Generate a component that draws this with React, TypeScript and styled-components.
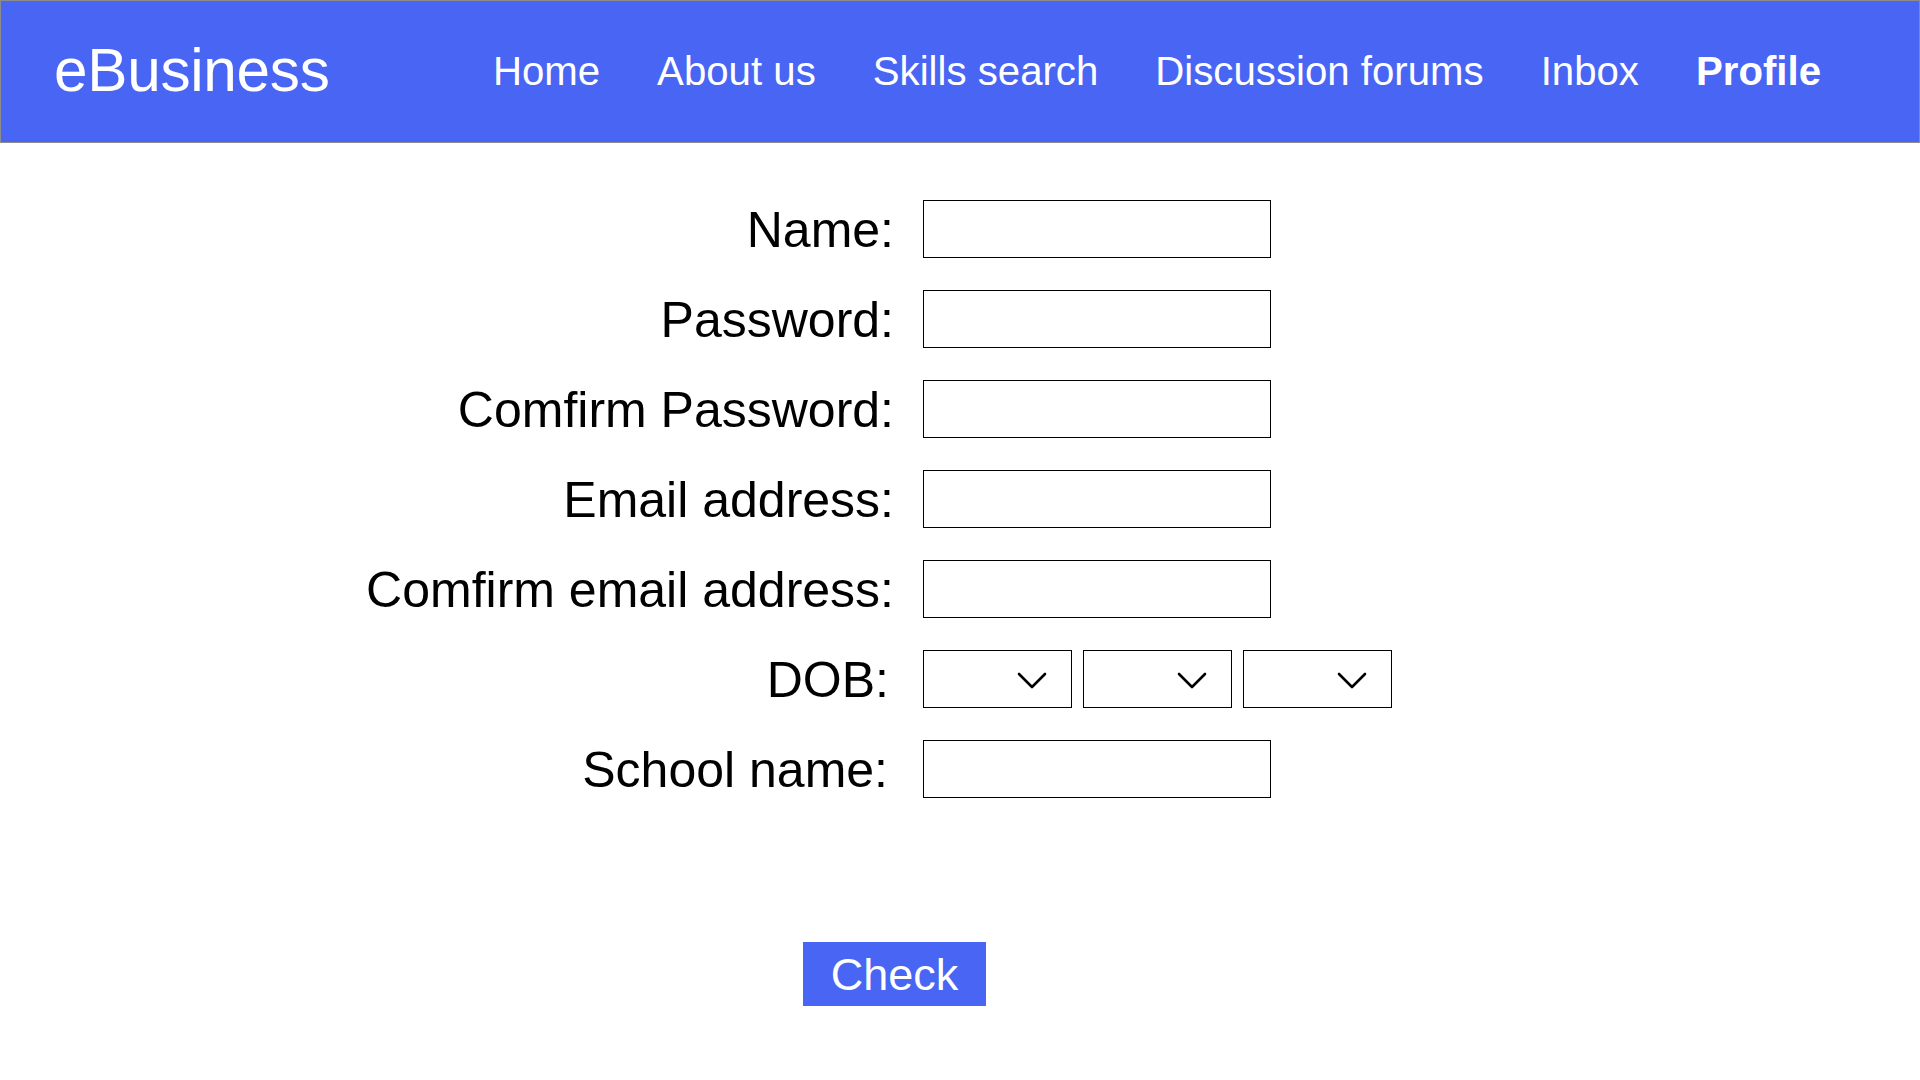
import React from "react";
import styled, { createGlobalStyle } from "styled-components";

const GlobalStyle = createGlobalStyle`
  html, body {
    margin: 0;
    padding: 0;
    background: #ffffff;
    font-family: "Liberation Sans", Arial, Helvetica, sans-serif;
    color: #000000;
  }
  * { box-sizing: border-box; }
`;

const Page = styled.div`
  width: 1920px;
  min-height: 1080px;
  display: flex;
  flex-direction: column;
`;

const Header = styled.header`
  height: 143px;
  background: #4965f3;
  border: 1px solid #8c8c8c;
  display: flex;
  align-items: center;
  justify-content: space-between;
  padding: 0 98px 0 53px;
`;

const Logo = styled.div`
  color: #ffffff;
  font-size: 60.3px;
  line-height: 1;
  letter-spacing: -0.3px;
  padding-bottom: 2px;
`;

const Nav = styled.nav`
  display: flex;
  align-items: center;
  gap: 57px;
  padding-top: 2px;
`;

const NavLink = styled.a<{ $active?: boolean }>`
  color: #ffffff;
  font-size: 40.2px;
  font-weight: ${(p) => (p.$active ? 700 : 400)};
  text-decoration: none;
  line-height: 1;
  cursor: pointer;
`;

const Form = styled.form`
  margin-top: 57px;
  display: grid;
  grid-template-columns: 866px auto;
  column-gap: 29px;
  row-gap: 32px;
  padding-left: 28px;
  align-items: center;
`;

const Label = styled.label<{ $shift?: number }>`
  justify-self: end;
  font-size: 50px;
  line-height: 1;
  padding-top: 2px;
  margin-right: ${(p) => p.$shift ?? 0}px;
`;

const TextInput = styled.input`
  width: 348px;
  height: 58px;
  border: 1px solid #000000;
  border-radius: 0;
  background: #ffffff;
  font-size: 24px;
  padding: 0 10px;
  outline: none;
`;

const SelectGroup = styled.div`
  display: flex;
  gap: 11px;
`;

const SelectBox = styled.div`
  width: 149px;
  height: 58px;
  border: 1px solid #000000;
  background: #ffffff;
  display: flex;
  align-items: center;
  justify-content: flex-end;
  padding: 4px 24px 0 0;
`;

const ButtonRow = styled.div`
  margin-top: 144px;
  padding-left: 803px;
  display: flex;
`;

const CheckButton = styled.button`
  width: 183px;
  height: 64px;
  background: #4965f3;
  color: #ffffff;
  border: none;
  border-radius: 0;
  font-family: "Liberation Sans", Arial, Helvetica, sans-serif;
  font-size: 45px;
  line-height: 1;
  padding: 0;
  cursor: pointer;
`;

const Chevron = () => (
  <svg width="30" height="18" viewBox="0 0 30 18" fill="none">
    <path d="M2 2 L15 15 L28 2" stroke="#000" strokeWidth="2.6" strokeLinecap="round" strokeLinejoin="round" />
  </svg>
);

const fields: { label: string; type: string }[] = [
  { label: "Name:", type: "text" },
  { label: "Password:", type: "password" },
  { label: "Comfirm Password:", type: "password" },
  { label: "Email address:", type: "email" },
  { label: "Comfirm email address:", type: "email" },
];

export default function App() {
  return (
    <>
      <GlobalStyle />
      <Page>
        <Header>
          <Logo>eBusiness</Logo>
          <Nav>
            <NavLink>Home</NavLink>
            <NavLink>About us</NavLink>
            <NavLink>Skills search</NavLink>
            <NavLink>Discussion forums</NavLink>
            <NavLink>Inbox</NavLink>
            <NavLink $active>Profile</NavLink>
          </Nav>
        </Header>
        <Form onSubmit={(e) => e.preventDefault()}>
          {fields.map((f) => (
            <React.Fragment key={f.label}>
              <Label>{f.label}</Label>
              <TextInput type={f.type} />
            </React.Fragment>
          ))}
          <Label $shift={5}>DOB:</Label>
          <SelectGroup>
            <SelectBox><Chevron /></SelectBox>
            <SelectBox><Chevron /></SelectBox>
            <SelectBox><Chevron /></SelectBox>
          </SelectGroup>
          <Label $shift={6}>School name:</Label>
          <TextInput type="text" />
        </Form>
        <ButtonRow>
          <CheckButton type="button">Check</CheckButton>
        </ButtonRow>
      </Page>
    </>
  );
}
